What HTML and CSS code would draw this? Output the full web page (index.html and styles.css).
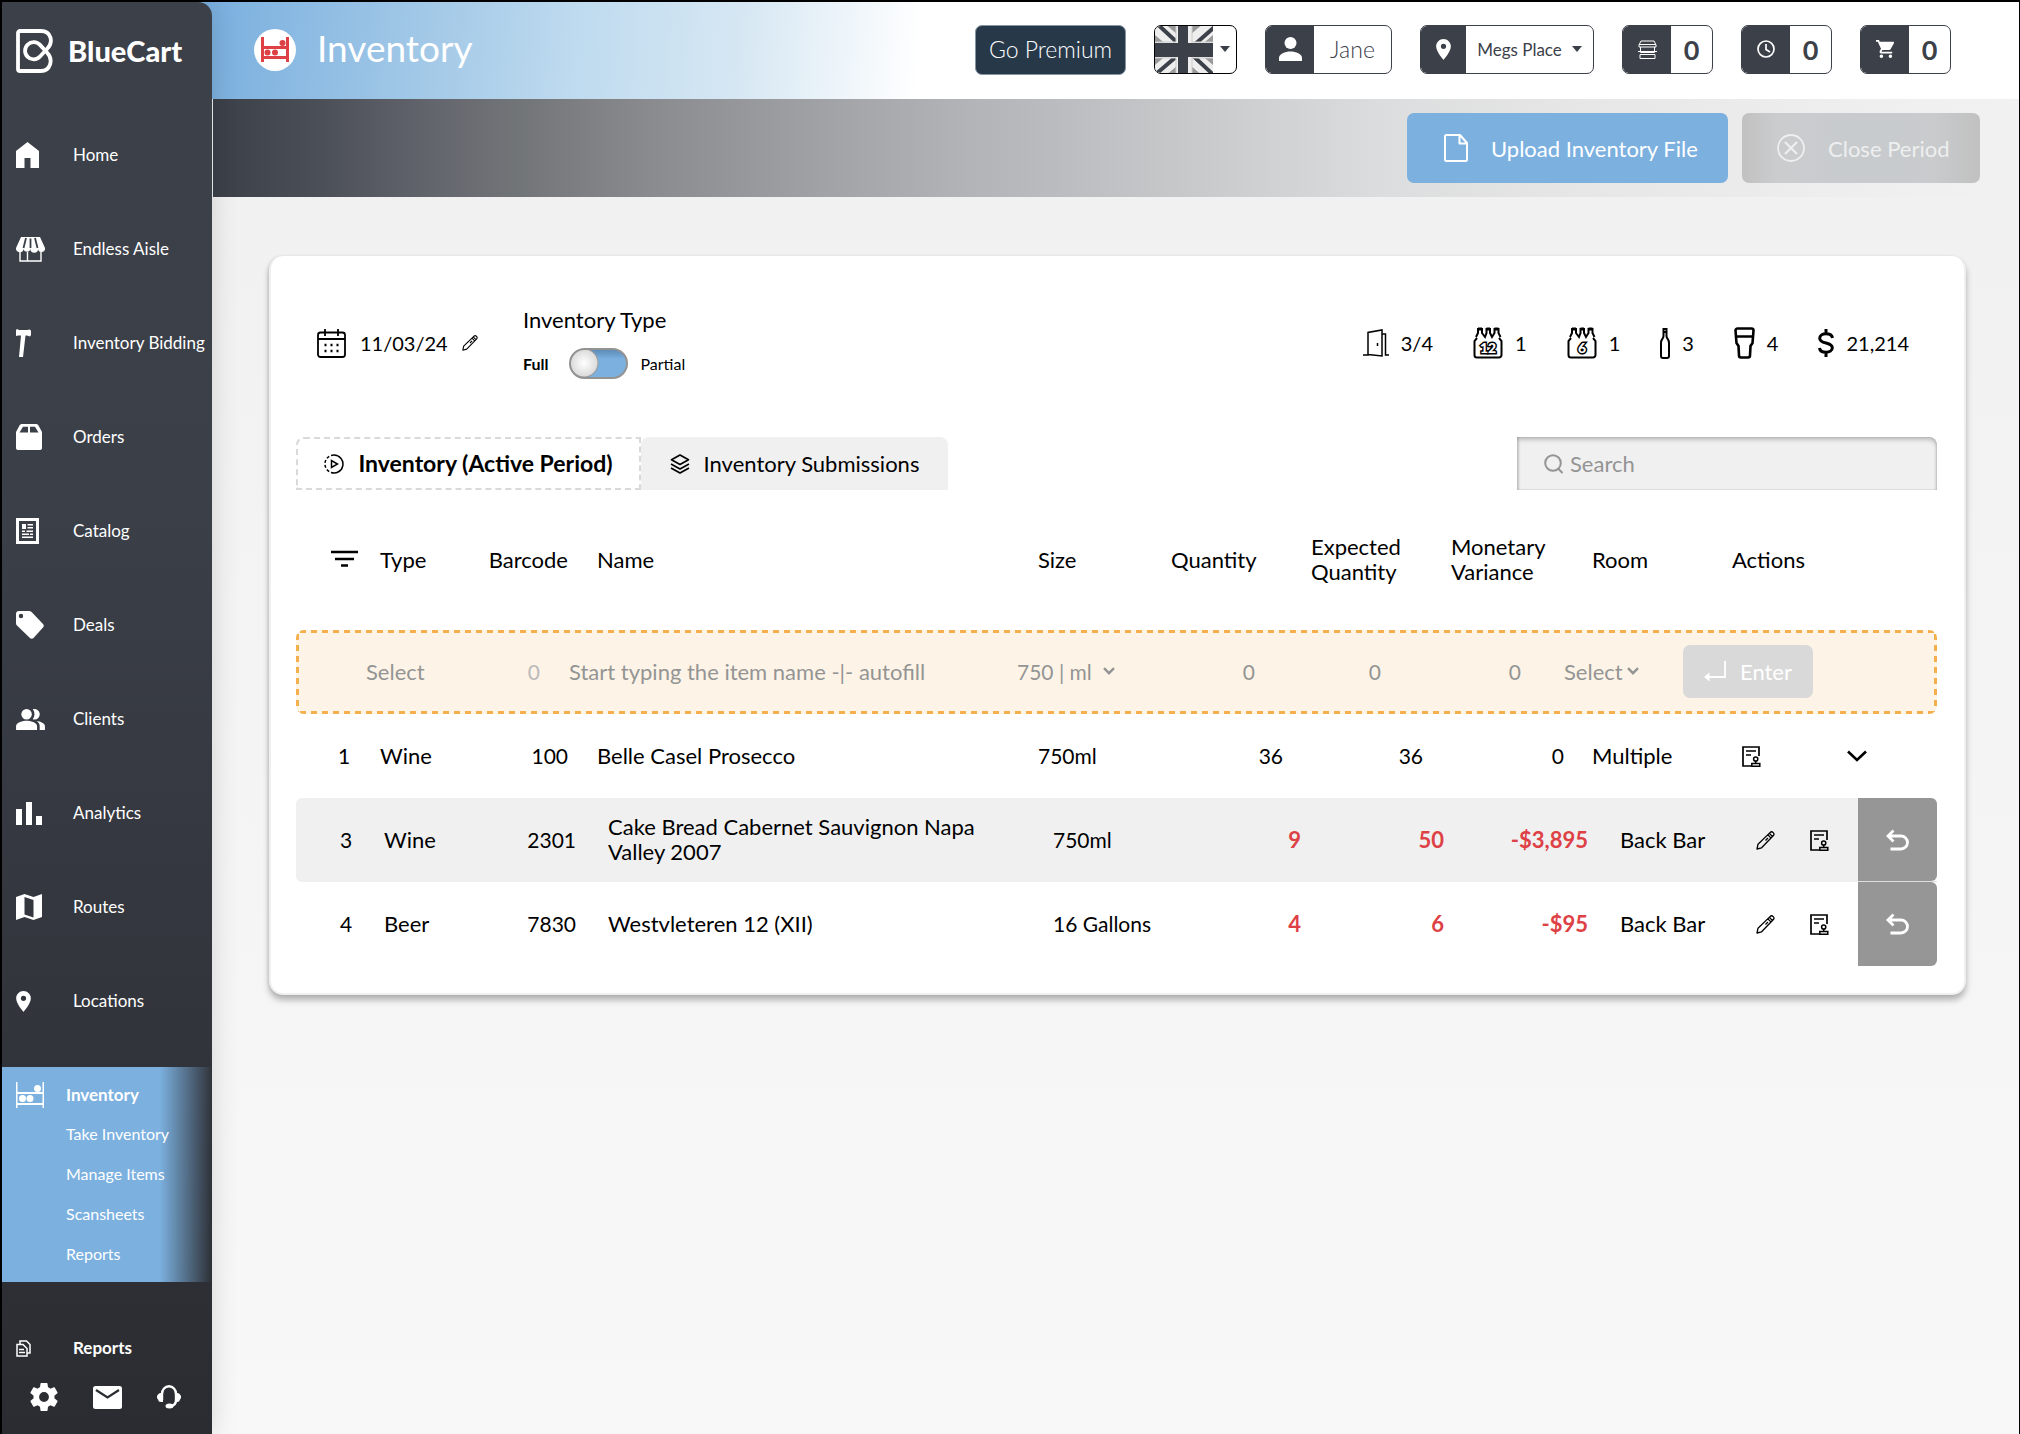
FILE: index.html
```html
<!DOCTYPE html>
<html lang="en">
<head>
<meta charset="utf-8">
<meta name="viewport" content="width=device-width, initial-scale=1">
<title>BlueCart – Inventory</title>
<link rel="stylesheet" href="styles.css">
</head>
<body>
<svg class="sprite" aria-hidden="true">
  <symbol id="shelf" viewBox="0 0 28 26"><path d="M0 0h1.500v10h25V0H28v26h-1.500v-3h-25v3H0zM1.500 12v9h25v-9z" fill-rule="evenodd"/><circle cx="21.500" cy="6.500" r="3.500"/><circle cx="6.500" cy="16.500" r="3.500"/><circle cx="14" cy="16.500" r="3.500"/></symbol>
  <symbol id="pin" viewBox="5 2 14 20"><path d="M12 2C8.130 2 5 5.130 5 9c0 5.250 7 13 7 13s7-7.750 7-13c0-3.870-3.130-7-7-7zm0 9.500a2.500 2.500 0 1 1 0-5 2.500 2.500 0 0 1 0 5z"/></symbol>
  <symbol id="pencil" viewBox="0 0 19 19"><path d="M1 18l1-4.800L14 1.600a2.200 2.200 0 0 1 3.200 3.200L5.600 16.800zM11.800 3.800l3.300 3.300M13.300 2.300l3.300 3.300M12 7L9.500 9.500" fill="none" stroke="currentColor" stroke-width="1.300" stroke-linejoin="round"/></symbol>
  <symbol id="note" viewBox="0 0 19 21"><path d="M9 20H1V1h16v9M4 5h10M4 9h5" fill="none" stroke="currentColor" stroke-width="1.700"/><circle cx="13.700" cy="13" r="2.100" fill="none" stroke="currentColor" stroke-width="1.500"/><path d="M13.700 15v2.200M9.800 17.400h8v2.800h-8z" fill="none" stroke="currentColor" stroke-width="1.500"/></symbol>
  <symbol id="undo" viewBox="0 0 23 22"><path d="M7.500 1.500L2 7l5.500 5.500M2.500 7H15a6.500 6.500 0 0 1 0 13H4.500" fill="none" stroke="currentColor" stroke-width="2.800"/></symbol>
  <symbol id="caret" viewBox="0 0 12 8"><path d="M1 1.200l5 5 5-5" fill="none" stroke="currentColor" stroke-width="2.400"/></symbol>
</svg>

<div class="app">
  <aside class="sidebar">
    <a class="brand" href="#">
      <svg width="37" height="44" viewBox="0 0 37 44" fill="none" stroke="#fff" stroke-width="3.800" aria-hidden="true"><path d="M2 4a2 2 0 0 1 2-2h21c10 0 13 11 6 18l-7 7.500a8.600 8.600 0 1 1 0-11.600l7 7.600c7 7.500 3 18.500-6 18.500H4a2 2 0 0 1-2-2z"/></svg>
      <span class="brand-name">BlueCart</span>
    </a>
    <nav class="nav" aria-label="Main">
      <a href="#"><span class="ic"><svg width="23" height="26" viewBox="0 0 23 26"><path d="M11.500 0L23 9v17h-8.500v-10h-6v10H0V9z"/></svg></span>Home</a>
      <a href="#"><span class="ic"><svg width="29" height="25" viewBox="0 0 29 25"><path d="M5 0h19l5 11a3.300 3.300 0 0 1-7 1 3.600 3.600 0 0 1-7.500 0 3.600 3.600 0 0 1-7 0A3.300 3.300 0 0 1 0 11z"/><path d="M10 1L7.500 11M19 1l2.500 10M14.500 1.500V11" stroke="#3b3f48" stroke-width="1.800"/><path d="M4 15v9h21v-9M11.500 15v9" fill="none" stroke="#fff" stroke-width="1.400"/></svg></span>Endless Aisle</a>
      <a href="#"><span class="ic"><svg width="15" height="28" viewBox="0 0 15 28"><path d="M1 0l2 1h8l3-.5 1 1.500v4l-1 1.500-3-1H9.500L7 28H3l2-21.500H2L0 7V1z"/></svg></span>Inventory Bidding</a>
      <a href="#"><span class="ic"><svg width="26" height="26" viewBox="0 0 26 26"><path fill-rule="evenodd" d="M6 0h14c1 0 2 .5 2.500 1.500L26 8v15.500a2 2 0 0 1-2 2.500H2a2 2 0 0 1-2-2.500V8l3.500-6.500C4 .5 5 0 6 0zm1 2.700L3.500 8.500H12V2.700zm7 0v5.800h8.500L19 2.700z"/></svg></span>Orders</a>
      <a href="#"><span class="ic"><svg width="23" height="26" viewBox="0 0 23 26"><path d="M1.500 1.500h20v23h-20z" fill="none" stroke="#fff" stroke-width="3"/><path d="M6 6h4v5H6zM11.500 6H17v1.500h-5.500zM11.500 9H17v1.500h-5.500zM6 12.500h3V14H6zM10.500 12.500H17V14h-6.500zM6 15.500h7V17H6zM14 15.500h3V17h-3zM6 18.500h11V20H6z"/></svg></span>Catalog</a>
      <a href="#"><span class="ic"><svg width="28" height="28" viewBox="0 0 28 28"><path fill-rule="evenodd" d="M3 0h10c1 0 2 .4 2.600 1L27 13c1 1 1 2.600 0 3.600L17.500 27c-1 1-2.600 1-3.600 0L1 14.500C.4 14 0 13 0 12V3a3 3 0 0 1 3-3zm2 2.800a2.200 2.200 0 1 0 0 4.400 2.200 2.200 0 0 0 0-4.400z"/></svg></span>Deals</a>
      <a href="#"><span class="ic"><svg width="29" height="21" viewBox="1 4 22 16"><path d="M16.670 13.130C18.040 14.060 19 15.320 19 17v3h4v-3c0-2.180-3.570-3.470-6.330-3.870zM15 12a4 4 0 1 0-1.330-7.760C14.500 5.270 15 6.580 15 8s-.5 2.730-1.330 3.760c.42.140.86.240 1.330.24z"/><circle cx="9" cy="8" r="4"/><path d="M9 13c-2.670 0-8 1.340-8 4v3h16v-3c0-2.660-5.330-4-8-4z"/></svg></span>Clients</a>
      <a href="#"><span class="ic"><svg width="26" height="23" viewBox="0 0 26 23"><path d="M0 7h6v16H0zM10 0h6v23h-6zM20 14h6v9h-6z"/></svg></span>Analytics</a>
      <a href="#"><span class="ic"><svg width="26" height="26" viewBox="0 0 26 26"><path fill-rule="evenodd" d="M0 3l8.500-3 9 3L26 0v23l-8.500 3-9-3L0 26zm8.500 0v17.500l9 3V6z"/></svg></span>Routes</a>
      <a href="#"><span class="ic"><svg width="15" height="21"><use href="#pin"/></svg></span>Locations</a>
    </nav>
    <nav class="subnav" aria-label="Inventory">
      <a class="current" href="#"><span class="ic"><svg width="28" height="26"><use href="#shelf"/></svg></span>Inventory</a>
      <a href="#">Take Inventory</a>
      <a href="#">Manage Items</a>
      <a href="#">Scansheets</a>
      <a href="#">Reports</a>
    </nav>
    <a class="reports" href="#"><span class="ic"><svg width="15" height="17" viewBox="0 0 15 17" fill="none" stroke="#fff" stroke-width="1.500"><path d="M1 4.500h6l4 4V16H1zM4 4V1h6.500L14 4.500V13h-2.500M3 9.500h5M3 12.500h6"/></svg></span>Reports</a>
    <div class="tools">
      <a href="#" aria-label="Settings"><svg width="28" height="28" viewBox="2 2 20 20"><path d="M19.430 12.980c.04-.32.07-.64.07-.98s-.03-.66-.07-.98l2.110-1.650c.19-.15.24-.42.12-.64l-2-3.460c-.12-.22-.39-.3-.61-.22l-2.490 1c-.52-.4-1.080-.73-1.690-.98l-.38-2.650C14.460 2.180 14.250 2 14 2h-4c-.25 0-.46.18-.49.42l-.38 2.650c-.61.25-1.170.59-1.690.98l-2.490-1c-.23-.09-.49 0-.61.22l-2 3.460c-.13.22-.07.49.12.64l2.110 1.650c-.04.32-.07.65-.07.98s.03.66.07.98l-2.110 1.650c-.19.15-.24.42-.12.64l2 3.460c.12.22.39.3.61.22l2.490-1c.52.4 1.080.73 1.690.98l.38 2.650c.03.24.24.42.49.42h4c.25 0 .46-.18.49-.42l.38-2.650c.61-.25 1.170-.59 1.690-.98l2.490 1c.23.09.49 0 .61-.22l2-3.460c.12-.22.07-.49-.12-.64l-2.110-1.650zM12 15.500a3.500 3.500 0 1 1 0-7 3.500 3.500 0 0 1 0 7z"/></svg></a>
      <a href="#" aria-label="Mail"><svg width="29" height="23" viewBox="0 0 29 23"><rect width="29" height="23" rx="2.500"/><path d="M3 4l11.500 7.500L26 4" fill="none" stroke="#2a2d31" stroke-width="2.200"/></svg></a>
      <a href="#" aria-label="Support"><svg width="24" height="24" viewBox="0 0 24 24"><path d="M5 15V9c0-4.500 3-7.700 7-7.700S19 4.500 19 9v6c0 4-2 6-6 6" fill="none" stroke="#fff" stroke-width="2.400"/><path d="M6 8v9H4a3 3 0 0 1-3-2.500L0 13v-2l1-1.500A3 3 0 0 1 4 8zM18 8v9h2a3 3 0 0 0 3-2.500l1-1.500v-2l-1-1.500A3 3 0 0 0 20 8z"/><ellipse cx="12.500" cy="21" rx="4" ry="2.500"/></svg></a>
    </div>
  </aside>

  <div class="page">
    <header class="topbar">
      <span class="title-icon"><svg width="28" height="25" viewBox="0 0 28 25"><path fill-rule="evenodd" d="M0 0h3v9h22V0h3v25h-3v-3H3v3H0zM3 12v7h22v-7z"/><circle cx="21.500" cy="6" r="3"/><circle cx="6.500" cy="15.500" r="3"/><circle cx="14" cy="15.500" r="3"/></svg></span>
      <h1>Inventory</h1>
      <div class="top-actions">
        <button class="premium" type="button">Go Premium</button>
        <button class="pill flag" type="button" aria-label="Language">
          <svg width="58" height="48" viewBox="0 0 58 48" aria-hidden="true"><path fill="#999" d="M0 0h58v48H0z"/><path d="M-6-6l70 60M64-6L-6 54" stroke="#eee" stroke-width="15"/><path d="M-2-6l28 26M64-3L38 20M-6 54l28-24M64 54L34 26" stroke="#3c4049" stroke-width="4"/><path d="M29 0v48M0 24h58" stroke="#ccc" stroke-width="17"/><path d="M29 0v48M0 24h58" stroke="#eee" stroke-width="15"/><path d="M28 0v48" stroke="#3c4049" stroke-width="10"/><path d="M0 24h58" stroke="#3c4049" stroke-width="14"/></svg>
          <span class="flag-caret"><i class="tri"></i></span>
        </button>
        <button class="pill user" type="button"><span class="pill-ic"><svg width="23" height="24" viewBox="0 0 23 24"><circle cx="11.500" cy="6" r="6"/><path d="M0 24v-3c0-4 6-6.500 11.500-6.500S23 17 23 21v3z"/></svg></span><span class="pill-tx">Jane</span></button>
        <button class="pill place" type="button"><span class="pill-ic"><svg width="15" height="21"><use href="#pin"/></svg></span><span class="pill-tx">Megs Place<i class="tri"></i></span></button>
        <button class="pill count" type="button" aria-label="Stores"><span class="pill-ic"><svg width="19" height="19" viewBox="0 0 19 19" fill="none" stroke="#fff"><path d="M3 1h13l2 4v2H1V5zM1 4.500h17M2.500 7v5.500h14V7M0 11.500h19M2 14.500h15v4H2z"/></svg></span><span class="pill-tx">0</span></button>
        <button class="pill count" type="button" aria-label="Pending"><span class="pill-ic"><svg width="18" height="18" viewBox="0 0 18 18" fill="none" stroke="#fff" stroke-width="1.700"><circle cx="9" cy="9" r="8"/><path d="M9 4v5.500l4 2.500"/></svg></span><span class="pill-tx">0</span></button>
        <button class="pill count" type="button" aria-label="Cart"><span class="pill-ic"><svg width="18" height="18" viewBox="1 2 20 20"><path d="M7 18a2 2 0 1 0 0 4 2 2 0 0 0 0-4zM1 2v2h2l3.600 7.590-1.350 2.450C4.500 15.400 5.500 17 7 17h12v-2H7.420l-.22-.37.9-1.630h7.450c.75 0 1.410-.41 1.750-1.030l3.580-6.490A1 1 0 0 0 20 4H5.210l-.94-2zm16 16a2 2 0 1 0 0 4 2 2 0 0 0 0-4z"/></svg></span><span class="pill-tx">0</span></button>
      </div>
    </header>

    <div class="toolbar">
      <button class="big upload" type="button"><svg width="24" height="28" viewBox="0 0 24 28" fill="none" stroke="currentColor" stroke-width="2" stroke-linejoin="round"><path d="M1 2.500A1.500 1.500 0 0 1 2.500 1H16l7 8v16.500a1.500 1.500 0 0 1-1.500 1.500h-19A1.500 1.500 0 0 1 1 25.500zM15.500 1v8.500H23"/></svg>Upload Inventory File</button>
      <button class="big close" type="button"><svg width="28" height="28" viewBox="0 0 28 28" fill="none" stroke="currentColor" stroke-width="1.800"><circle cx="14" cy="14" r="13"/><path d="M8 8l12 12M20 8L8 20" stroke-width="2.200"/></svg>Close Period</button>
    </div>

    <main class="content">
      <section class="card">
        <div class="summary">
          <div class="date">
            <svg width="29" height="29" viewBox="0 0 29 29" fill="none" stroke="#000" stroke-width="1.800"><rect x="1" y="3.500" width="27" height="24.500" rx="2.500"/><path d="M1 10h27M8 0v7M21 0v7"/><path d="M7.500 16h2M13.500 16h2M19.500 16h2M7.500 22h2M13.500 22h2M19.500 22h2" stroke-width="2.500"/></svg>
            <span>11/03/24</span>
            <button class="bare" type="button" aria-label="Edit date"><svg width="16" height="16"><use href="#pencil"/></svg></button>
          </div>
          <div class="kind">
            <span id="kind-title">Inventory Type</span>
            <label class="switch-row"><b>Full</b><input class="switch" type="checkbox" role="switch" aria-labelledby="kind-title"><span>Partial</span></label>
          </div>
          <ul class="stats">
            <li><svg width="26" height="28" viewBox="0 0 26 28" fill="none" stroke="#000" stroke-width="1.500"><path d="M0 26h5V3.500L19 1v26L5 25.500M19 5h3.500v21H26M14.500 14v3"/></svg>3/4</li>
            <li><svg width="30" height="32" viewBox="0 0 30 32" fill="none" stroke="#000" stroke-width="2"><path d="M4 11L1.500 14v14A2.500 2.500 0 0 0 4 30.500h22a2.500 2.500 0 0 0 2.500-2.500V14L26 11M5 1v5l-2 4M9 1v5l3 4 1.500-4V1M17 1v5l2 4 2.500-4V1M25.500 1v5l2 4"/><path d="M5 2h4M13.500 2H17M21.500 2h4" stroke-width="3"/><text class="pack" x="15" y="26">12</text></svg>1</li>
            <li><svg width="30" height="32" viewBox="0 0 30 32" fill="none" stroke="#000" stroke-width="2"><path d="M4 11L1.500 14v14A2.500 2.500 0 0 0 4 30.500h22a2.500 2.500 0 0 0 2.500-2.500V14L26 11M5 1v5l-2 4M9 1v5l3 4 1.500-4V1M17 1v5l2 4 2.500-4V1M25.500 1v5l2 4"/><path d="M5 2h4M13.500 2H17M21.500 2h4" stroke-width="3"/><text class="pack" x="15" y="26">6</text></svg>1</li>
            <li><svg width="10" height="31" viewBox="0 0 10 31" fill="none" stroke="#000" stroke-width="2"><path d="M3.500 1h3v7c0 3 2.500 3 2.500 7v13a2 2 0 0 1-2 2H3a2 2 0 0 1-2-2V15c0-4 2.500-4 2.500-7zM3 4h4"/></svg>3</li>
            <li><svg width="21" height="32" viewBox="0 0 21 32" fill="none" stroke="#000" stroke-width="2.600"><path d="M3.500 1.500h14a2 2 0 0 1 2 2L18.500 16l-2 3-.5 9.500a2 2 0 0 1-2 2H7a2 2 0 0 1-2-2L4.500 19l-2-3L1.500 3.500a2 2 0 0 1 2-2zM2 9.500h17"/></svg>4</li>
            <li><svg width="16" height="28" viewBox="0 0 16 28" fill="none" stroke="#000" stroke-width="3"><path d="M14.500 9C14 6 11.500 4.800 8 4.800S1.700 6.500 1.700 9.200c0 3 3 4 6.300 4.800s6.300 1.800 6.300 4.800c0 2.700-2.800 4.400-6.300 4.400S1.800 21.600 1.500 19M8 0v5M8 23v5"/></svg>21,214</li>
          </ul>
        </div>

        <div class="tabbar">
          <div class="tabs" role="tablist">
            <button class="tab active" type="button" role="tab" aria-selected="true"><svg width="20" height="20" viewBox="0 0 20 20" fill="none" stroke="#000" stroke-width="1.500"><path d="M10 1a9 9 0 1 1-3 17.500"/><path d="M10 1a9 9 0 0 0-3 17.500" stroke-dasharray="3 2"/><path d="M7.500 6.500v7l6-3.500z"/></svg>Inventory (Active Period)</button>
            <button class="tab" type="button" role="tab" aria-selected="false"><svg width="20" height="20" viewBox="0 0 20 20" fill="none" stroke="#000" stroke-width="1.700" stroke-linejoin="round"><path d="M10 1l8.500 4.700L10 10.400 1.500 5.700zM1 10l9 5 9-5M1 14l9 5 9-5"/></svg>Inventory Submissions</button>
          </div>
          <label class="search"><svg width="20" height="20" viewBox="0 0 20 20" fill="none" stroke="#949494" stroke-width="2"><circle cx="9" cy="9" r="7.800"/><path d="M14 14.500l4.500 4.500"/></svg><input type="search" placeholder="Search" aria-label="Search"></label>
        </div>

        <table class="items">
          <thead>
            <tr class="cols">
              <th class="num"><button class="bare" type="button" aria-label="Filter"><svg width="27" height="18" viewBox="0 0 27 18" stroke="#000" stroke-width="2.600"><path d="M0 2h27M4 9h19M10 15.500h7"/></svg></button></th>
              <th>Type</th><th class="code">Barcode</th><th>Name</th><th>Size</th><th>Quantity</th><th>Expected Quantity</th><th>Monetary Variance</th><th>Room</th><th>Actions</th>
            </tr>
          </thead>
          <tbody>
            <tr class="entry">
              <td></td>
              <td><select aria-label="Type"><option>Select</option></select></td>
              <td class="code"><input type="text" class="faint" placeholder="0" aria-label="Barcode"></td>
              <td><input type="text" placeholder="Start typing the item name -|- autofill" aria-label="Name"></td>
              <td class="pick size"><select aria-label="Size"><option>750 | ml</option></select><svg width="12" height="8"><use href="#caret"/></svg></td>
              <td class="val"><input type="text" placeholder="0" aria-label="Quantity"></td>
              <td class="val"><input type="text" placeholder="0" aria-label="Expected quantity"></td>
              <td class="val"><input type="text" placeholder="0" aria-label="Monetary variance"></td>
              <td class="pick tight"><select aria-label="Room"><option>Select</option></select><svg width="12" height="8"><use href="#caret"/></svg></td>
              <td><button class="enter" type="button"><svg width="22" height="20" viewBox="0 0 22 20" fill="none" stroke="#fff" stroke-width="1.800"><path d="M21 0v16H3"/><path d="M5.500 11.500v9L0 16z" fill="#fff" stroke="none"/></svg>Enter</button></td>
            </tr>
            <tr class="cols">
              <td class="num">1</td><td>Wine</td><td class="code">100</td><td>Belle Casel Prosecco</td><td class="size">750ml</td><td class="val">36</td><td class="val">36</td><td class="val">0</td><td>Multiple</td>
              <td class="acts wide"><button class="bare" type="button" aria-label="Note"><svg width="19" height="21"><use href="#note"/></svg></button><button class="bare" type="button" aria-label="Expand"><svg width="20" height="12" viewBox="0 0 20 12" fill="none" stroke="#000" stroke-width="2.600"><path d="M1 1.500l9 8.500 9-8.500"/></svg></button></td>
            </tr>
            <tr class="line shaded">
              <td class="num">3</td><td>Wine</td><td class="code">2301</td><td class="name">Cake Bread Cabernet Sauvignon Napa Valley 2007</td><td class="size">750ml</td><td class="val bad">9</td><td class="val bad">50</td><td class="val bad">-$3,895</td><td>Back Bar</td>
              <td class="acts"><button class="bare" type="button" aria-label="Edit"><svg width="19" height="19"><use href="#pencil"/></svg></button><button class="bare" type="button" aria-label="Note"><svg width="19" height="21"><use href="#note"/></svg></button></td>
              <td class="undo"><button type="button" aria-label="Undo"><svg width="23" height="22"><use href="#undo"/></svg></button></td>
            </tr>
            <tr class="line">
              <td class="num">4</td><td>Beer</td><td class="code">7830</td><td class="name">Westvleteren 12 (XII)</td><td class="size">16 Gallons</td><td class="val bad">4</td><td class="val bad">6</td><td class="val bad">-$95</td><td>Back Bar</td>
              <td class="acts"><button class="bare" type="button" aria-label="Edit"><svg width="19" height="19"><use href="#pencil"/></svg></button><button class="bare" type="button" aria-label="Note"><svg width="19" height="21"><use href="#note"/></svg></button></td>
              <td class="undo"><button type="button" aria-label="Undo"><svg width="23" height="22"><use href="#undo"/></svg></button></td>
            </tr>
          </tbody>
        </table>
      </section>
    </main>
  </div>
</div>
</body>
</html>
```
FILE: styles.css
```css
* { box-sizing: border-box; }

body {
  margin: 0;
  font-family: Lato, "Open Sans", sans-serif;
  font-size: 22px;
  line-height: 25px;
  color: #000;
}

button, input, select { font: inherit; color: inherit; margin: 0; }
button { cursor: pointer; }
a { color: inherit; text-decoration: none; }
svg { display: block; flex: none; }
.sprite { display: none; }
.bare { padding: 0; border: 0; background: none; }

.app {
  display: flex;
  min-height: 100vh;
  border: 0 solid #000;
  border-width: 2px 1px 0 2px;
  background: linear-gradient(90deg, #7bb0df 300px, transparent 300px) 0 0 / 100% 97px no-repeat, linear-gradient(#f0f0f0, #f8f8f8);
}

/* Sidebar */
.sidebar {
  position: relative;
  z-index: 1;
  flex: none;
  display: flex;
  flex-direction: column;
  width: 210px;
  border-top-right-radius: 14px;
  background: linear-gradient(#3c4049 0%, #3b3f48 35%, #2a2c31 100%);
  box-shadow: 0 0 28px rgba(0, 0, 0, 0.14);
  color: #fff;
  fill: #fff;
  font-size: 17px;
  line-height: 22px;
}
.brand {
  display: flex;
  align-items: center;
  gap: 15px;
  height: 106px;
  padding: 0 14px 9px;
}
.brand-name { font-size: 29px; font-weight: 900; line-height: 36px; }
.ic { flex: none; width: 57px; }
.nav a {
  display: flex;
  align-items: center;
  height: 94px;
  padding-left: 14px;
  white-space: nowrap;
}
.subnav {
  display: flex;
  flex-direction: column;
  gap: 18px;
  margin-top: 19px;
  padding: 14px 0 17px;
  background: linear-gradient(90deg, #7bb0df 158px, rgba(123, 176, 223, 0));
  font-size: 16px;
}
.subnav a { padding-left: 64px; }
.subnav .current {
  display: flex;
  align-items: center;
  height: 28px;
  margin-bottom: -4px;
  padding-left: 14px;
  font-size: 17px;
  font-weight: 700;
}
.subnav .ic { width: 50px; }
.reports {
  display: flex;
  align-items: center;
  margin-top: 55px;
  padding-left: 14px;
  font-weight: 700;
}
.tools {
  display: flex;
  align-items: center;
  gap: 35px;
  padding: 24px 28px 22px;
}

/* Top bar */
.page { flex: 1; min-width: 0; }
.topbar {
  display: flex;
  align-items: center;
  height: 97px;
  padding: 0 68px 2px 42px;
  background: linear-gradient(95deg, #7bb0df 0, #a3c9e7 220px, #bfdbef 370px, #d6e7f3 530px, #fff 710px);
}
.title-icon {
  display: grid;
  place-items: center;
  width: 42px;
  height: 42px;
  border-radius: 50%;
  background: #fff;
  fill: #de4145;
}
h1 {
  margin: 0 0 0 21px;
  padding-bottom: 4px;
  color: #fff;
  font-size: 37px;
  font-weight: 400;
  line-height: 44px;
}
.top-actions { display: flex; gap: 28px; margin-left: auto; }
.premium {
  width: 151px;
  height: 50px;
  padding: 0;
  border: 1px solid #8595a2;
  border-radius: 7px;
  background: #273849;
  color: #fff;
  font-size: 23px;
  font-weight: 300;
}
.pill {
  display: flex;
  height: 49px;
  padding: 0;
  overflow: hidden;
  border: 1px solid #3c4049;
  border-radius: 7px;
  background: #fff;
  color: #3c4049;
}
.pill-ic {
  display: grid;
  place-items: center;
  width: 48px;
  height: 47px;
  background: #3c4049;
  fill: #fff;
}
.pill-tx {
  flex: 1;
  display: flex;
  align-items: center;
  justify-content: center;
  gap: 10px;
  height: 47px;
}
.tri {
  border: 5px solid transparent;
  border-width: 6px 5px 0;
  border-top-color: #3c4049;
}
.flag { width: 83px; border-color: #000; }
.flag-caret { display: grid; place-items: center; flex: 1; height: 47px; }
.user { width: 127px; font-size: 23px; font-weight: 300; }
.place { width: 174px; font-size: 17px; }
.place .pill-ic { width: 45px; }
.count { width: 91px; font-size: 27px; font-weight: 700; }

.toolbar {
  display: flex;
  justify-content: flex-end;
  gap: 14px;
  height: 98px;
  margin-left: 1px;
  padding: 14px 39px;
  background: linear-gradient(90deg, #3b3f48 0%, #4b4f57 6%, #63656d 12%, #727578 17%, #8c8d90 25%, #a3a5a8 35%, #b3b4b8 42%, #c4c5c7 52%, #dcddde 65%, #e6e6e6 75%, #efefef 92%, #f1f1f1);
}
.big {
  display: flex;
  align-items: center;
  gap: 23px;
  height: 70px;
  border: 0;
  border-radius: 7px;
  color: #fff;
}
.upload { width: 321px; padding: 0 0 0 37px; background: #7bb0df; }
.close {
  width: 238px;
  padding: 0 0 0 35px;
  background: linear-gradient(90deg, #c1c1c0, #cbccce 15%, #c7cbce 50%, #c9cbcd 80%, #c1c1c0);
  color: #eeefef;
}

/* Card */
.content { padding: 59px 53px 60px 57px; }
.card {
  padding: 0 27px 27px 25px;
  border: 2px solid #f0f0f0;
  border-top: 0;
  border-radius: 14px;
  background: #fff;
  box-shadow: 0 5px 6px rgba(0, 0, 0, 0.28), -1px 0 3px rgba(0, 0, 0, 0.08);
}
.summary {
  display: flex;
  align-items: center;
  padding: 51px 28px 58px 21px;
}
.date { display: flex; align-items: center; gap: 14px; width: 206px; font-size: 20px; }
.kind { display: grid; gap: 16px; }
.switch-row {
  display: flex;
  align-items: center;
  height: 31px;
  font-size: 16px;
}
.switch {
  appearance: none;
  width: 59px;
  height: 31px;
  margin: 0 12px 0 21px;
  border: 2px solid #939393;
  border-radius: 16px;
  background: radial-gradient(circle at 13px 13px, #fff 0, #dcdcdc 13px, #999 14px, transparent 15px), linear-gradient(#5d8cb8, #7bb0df 9px);
}
.stats {
  display: flex;
  align-items: center;
  gap: 40px;
  margin: 0 0 0 auto;
  padding: 0;
  list-style: none;
  font-size: 20px;
}
.stats li { display: flex; align-items: center; gap: 12px; }
.pack {
  fill: #fff;
  stroke: #000;
  stroke-width: 3px;
  paint-order: stroke;
  font-size: 14px;
  font-weight: 900;
  text-anchor: middle;
}

.tabbar { display: flex; justify-content: space-between; height: 53px; }
.tabs { display: flex; }
.tab {
  display: flex;
  align-items: center;
  justify-content: center;
  gap: 14px;
  width: 307px;
  padding: 0;
  border: 0;
  border-radius: 8px 8px 0 0;
  background: #f0f0f0;
}
.tab.active {
  width: 345px;
  border: 2px dashed #d9d9d9;
  border-radius: 8px 0 0 0;
  background: #fff;
  font-size: 23px;
  font-weight: 700;
}
.search {
  display: flex;
  align-items: center;
  gap: 6px;
  width: 420px;
  padding: 0 27px;
  border-radius: 0 8px 0 0;
  background: #f0f0f0;
  box-shadow: inset 0 3px 4px rgba(0, 0, 0, 0.2), inset 2px 0 2px rgba(0, 0, 0, 0.12), inset -1px 0 2px rgba(0, 0, 0, 0.12);
}
.search input { width: 100%; padding: 0; border: 0; outline: 0; background: none; }
::placeholder { color: #949494; opacity: 1; }

/* Item table: group and line rows carry different column tracks */
.items, .items thead, .items tbody { display: block; }
.items tr { display: grid; align-items: center; height: 84px; }
.items th, .items td { min-width: 0; padding: 0 0 2px; text-align: left; font-weight: 400; }
.items .cols { grid-template-columns: 84fr 106fr 111fr 441fr 133fr 140fr 140fr 141fr 140fr 205fr; }
.items .line { grid-template-columns: 88fr 104fr 120fr 445fr 143fr 137fr 143fr 144fr 126fr 112fr 79fr; }
.items .entry { grid-template-columns: 70fr 105fr 98fr 448fr 138fr 128fr 126fr 140fr 134fr 254fr; }
.items thead tr { height: 140px; }
.items th:nth-child(6), .items th:nth-child(7), .items th:nth-child(8) { padding-right: 24px; }
.items .num { padding-left: 12px; text-align: center; }
.items .num .bare svg { margin: auto; }
.items .code { padding-right: 29px; text-align: right; }
.items .val { padding-right: 28px; text-align: right; }
.items .line .code, .items .line .val { padding-right: 32px; }
.items .name { padding-right: 50px; }
.items .shaded { border-radius: 6px; background: #f0f0f0; }
.items .num, .items td.code, .items .val, .items .size { font-size: 21px; }
.items .bad { color: #de4145; font-size: 22px; font-weight: 700; }

.acts { display: flex; align-items: center; gap: 35px; }
.items .acts { padding: 0 0 0 10px; }
.acts.wide { gap: 86px; }
.items .undo { height: 84px; padding: 0; border-bottom: 1px solid #dedede; }
.undo button {
  display: grid;
  place-items: center;
  width: 100%;
  height: 100%;
  padding: 0;
  border: 0;
  border-radius: 0 6px 6px 0;
  background: #969696;
  color: #fff;
}
.items tr:last-child .undo { border: 0; }

.entry {
  --dash: #f4b04d 0 6px, transparent 6px 11px;
  border-radius: 8px;
  background:
    repeating-linear-gradient(90deg, var(--dash)) 4px 0 / 100% 3px no-repeat,
    repeating-linear-gradient(90deg, var(--dash)) 4px 100% / 100% 3px no-repeat,
    repeating-linear-gradient(var(--dash)) 0 4px / 3px 100% no-repeat,
    repeating-linear-gradient(var(--dash)) 100% 4px / 3px 100% no-repeat,
    #fdf4e7;
  color: #949494;
}
.entry input, .entry select {
  width: 100%;
  padding: 0;
  border: 0;
  outline: 0;
  background: none;
  appearance: none;
}
.entry .code input, .entry .val input { text-align: right; }
.faint::placeholder { color: #bababa; }
.pick { display: flex; align-items: center; gap: 11px; }
.pick select { width: auto; }
.items .tight { gap: 4px; padding-left: 15px; }
.enter {
  display: flex;
  align-items: center;
  justify-content: center;
  gap: 14px;
  width: 130px;
  height: 53px;
  padding: 0;
  border: 0;
  border-radius: 7px;
  background: #d9d9d9;
  color: #fff;
}
```
